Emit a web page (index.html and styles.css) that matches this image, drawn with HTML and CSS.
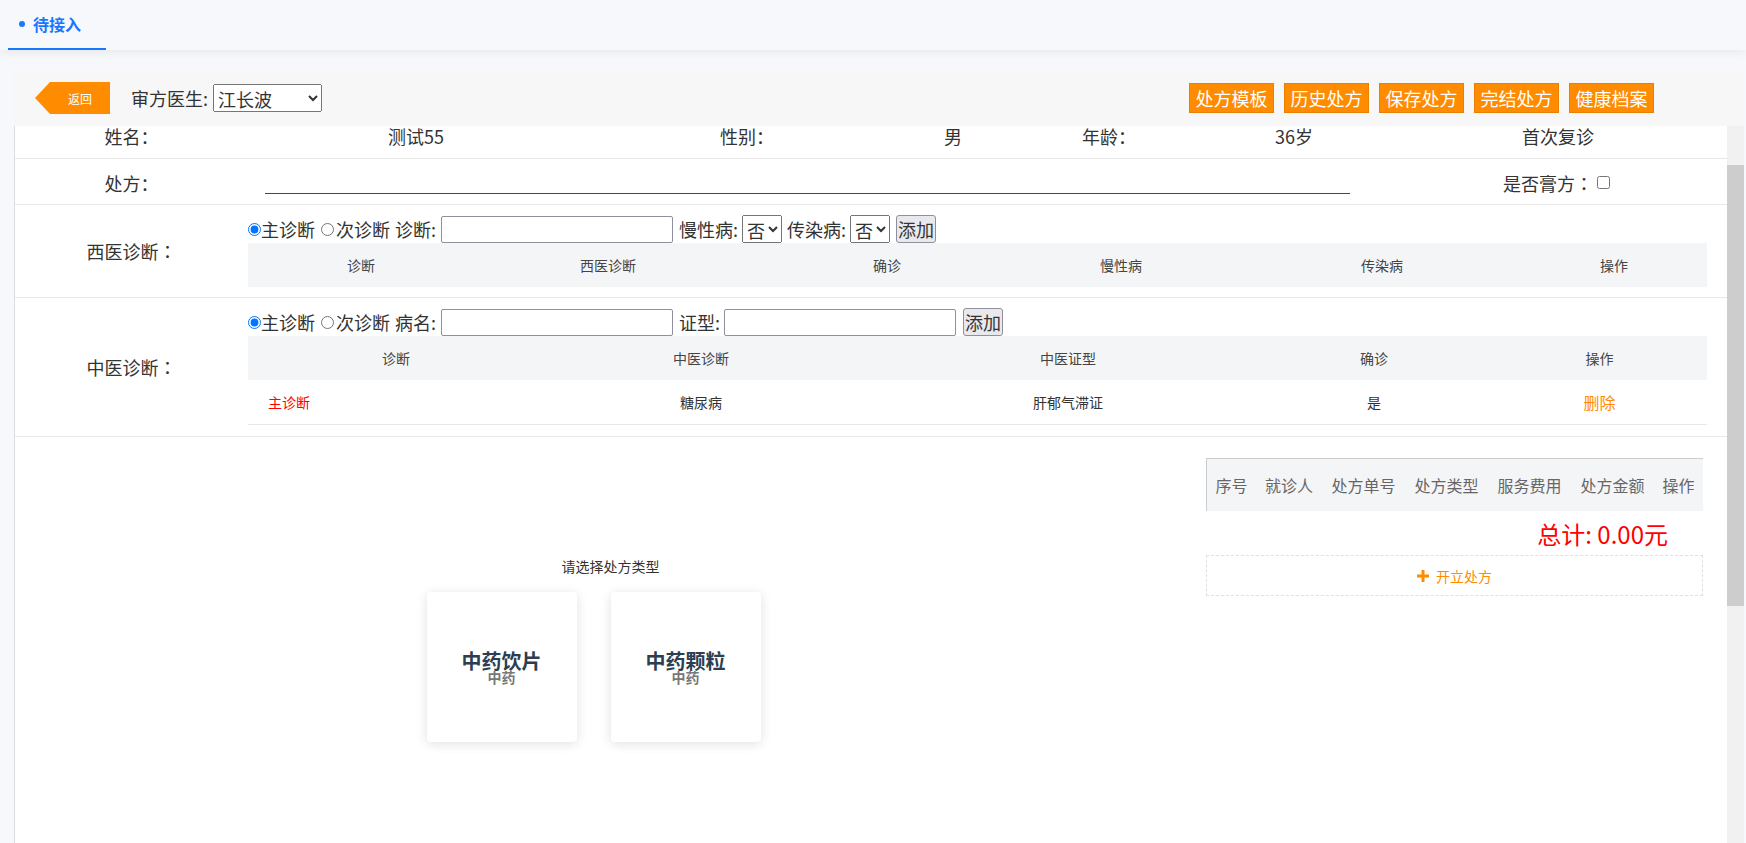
FILE: index.html
```html
<!DOCTYPE html>
<html lang="zh-CN">
<head>
<meta charset="utf-8">
<title>待接入</title>
<link rel="stylesheet" href="styles.css">
</head>
<body>
<div class="topbar">
  <div class="tab"><span class="dot"></span>待接入</div>
</div>
<div class="main">
  <div class="toolbar">
    <div class="back">返回</div>
    <div class="doctor"><span>审方医生:</span><select class="doc-select"><option>江长波</option></select></div>
    <div class="actions">
      <button class="act">处方模板</button>
      <button class="act">历史处方</button>
      <button class="act">保存处方</button>
      <button class="act">完结处方</button>
      <button class="act">健康档案</button>
    </div>
  </div>
  <div class="panel">
    <div class="content">
      <div class="row info info-top">
        <div class="c">姓名<span class="colon">：</span></div>
        <div class="c">测试55</div>
        <div class="c">性别<span class="colon">：</span></div>
        <div class="c">男</div>
        <div class="c">年龄<span class="colon">：</span></div>
        <div class="c">36岁</div>
        <div></div>
        <div class="c">首次复诊</div>
      </div>
      <div class="row info rx">
        <div class="c">处方<span class="colon">：</span></div>
        <div class="c span5"><input class="rx-input" type="text"></div>
        <div></div>
        <div class="c gao">是否膏方<span class="colon">：</span><input class="chk" type="checkbox"></div>
      </div>
      <div class="row diag">
        <div class="diag-label">西医诊断<span class="colon">：</span></div>
        <div class="diag-body">
          <div class="controls">
            <input class="radio" type="radio" name="w" checked><span>主诊断</span>
            <input class="radio r2" type="radio" name="w"><span>次诊断</span>
            <span class="lbl">诊断:</span><input class="txt" type="text">
            <span class="lbl2">慢性病:</span><select class="yn"><option>否</option><option>是</option></select>
            <span class="lbl3">传染病:</span><select class="yn"><option>否</option><option>是</option></select>
            <button class="add">添加</button>
          </div>
          <div class="thead west-cols">
            <div>诊断</div><div>西医诊断</div><div>确诊</div><div>慢性病</div><div>传染病</div><div>操作</div><div></div>
          </div>
        </div>
      </div>
      <div class="row diag">
        <div class="diag-label">中医诊断<span class="colon">：</span></div>
        <div class="diag-body tcm">
          <div class="controls">
            <input class="radio" type="radio" name="t" checked><span>主诊断</span>
            <input class="radio r2" type="radio" name="t"><span>次诊断</span>
            <span class="lbl">病名:</span><input class="txt" type="text">
            <span class="lbl2">证型:</span><input class="txt txt2" type="text">
            <button class="add add2">添加</button>
          </div>
          <div class="thead tcm-cols">
            <div>诊断</div><div>中医诊断</div><div>中医证型</div><div>确诊</div><div class="last">操作</div>
          </div>
          <div class="tbody tcm-cols">
            <div class="main-diag">主诊断</div><div>糖尿病</div><div>肝郁气滞证</div><div>是</div><div class="last del">删除</div>
          </div>
        </div>
      </div>
      <div class="rx-area">
        <div class="pick">
          <div class="pick-title">请选择处方类型</div>
          <div class="cards">
            <div class="card"><div class="card-title">中药饮片</div><div class="card-sub">中药</div></div>
            <div class="card"><div class="card-title">中药颗粒</div><div class="card-sub">中药</div></div>
          </div>
        </div>
        <div class="orders">
          <div class="order-head">
            <div>序号</div><div>就诊人</div><div>处方单号</div><div>处方类型</div><div>服务费用</div><div>处方金额</div><div>操作</div>
          </div>
          <div class="total">总计: 0.00元</div>
          <div class="open">
            <svg class="plus" width="12" height="12" viewBox="0 0 12 12"><rect x="4.5" y="0" width="3" height="12" fill="#ff8c00"/><rect x="0" y="4.5" width="12" height="3" fill="#ff8c00"/></svg>
            <span>开立处方</span>
          </div>
        </div>
      </div>
    </div>
    <div class="scrollbar"><div class="thumb"></div></div>
  </div>
</div>
</body>
</html>
```

FILE: styles.css
```css
* { box-sizing: border-box; }
html, body { margin: 0; padding: 0; }
body {
  width: 1746px;
  height: 843px;
  overflow: hidden;
  background: #f7f8fb;
  font-family: "Noto Sans CJK SC", "Noto Sans", sans-serif;
  color: #333;
}
.colon {
  font-family: "Noto Sans CJK JP", "Noto Sans CJK SC", sans-serif;
}
.topbar {
  height: 50px;
  background: #f7f8fb;
  box-shadow: 0 2px 10px rgba(0, 0, 0, 0.07);
  position: relative;
  z-index: 1;
  display: flex;
}
.tab {
  margin-left: 8px;
  width: 98px;
  height: 50px;
  border-bottom: 2px solid #1677ff;
  display: flex;
  align-items: center;
  padding-left: 11px;
  font-size: 16px;
  font-weight: bold;
  color: #1677ff;
}
.dot {
  width: 6px;
  height: 6px;
  border-radius: 50%;
  background: #1677ff;
  margin-right: 8px;
}
.main {
  margin: 20px 2px 0 14px;
  height: 773px;
  display: flex;
  flex-direction: column;
}
.toolbar {
  flex: none;
  height: 56px;
  background: #f7f7f7;
  display: flex;
  align-items: center;
  padding-left: 21px;
  padding-right: 90px;
}
.back {
  width: 75px;
  height: 32px;
  background: #ff8c00;
  clip-path: polygon(0 50%, 15px 0, 100% 0, 100% 100%, 15px 100%);
  color: #fff;
  font-size: 12px;
  display: flex;
  align-items: center;
  justify-content: center;
  padding-left: 15px;
}
.doctor {
  margin-left: 21px;
  font-size: 18px;
  display: flex;
  align-items: center;
  color: #333;
}
.doc-select {
  margin-left: 5px;
  width: 109px;
  height: 28px;
  font-size: 18px;
  font-family: inherit;
  color: #333;
}
.actions {
  margin-left: auto;
  display: flex;
  gap: 10px;
}
.act {
  width: 85px;
  height: 30px;
  padding: 0;
  background: #ff8c00;
  border: 1px solid #e98000;
  color: #fff;
  font-size: 18px;
  font-family: inherit;
  line-height: 28px;
}
.panel {
  flex: 1;
  min-height: 0;
  display: flex;
}
.content {
  flex: 1;
  min-width: 0;
  background: #fff;
  border-left: 1px solid #dcdcdc;
  display: flex;
  flex-direction: column;
}
.scrollbar {
  flex: none;
  width: 17px;
  background: #f1f1f1;
}
.thumb {
  margin-top: 39px;
  height: 441px;
  background: #cdcdcd;
}
.row {
  border-bottom: 1px solid #e8e8e8;
}
.info {
  display: grid;
  grid-template-columns: 233px 336px 326px 86px 226px 144px 23px 1fr;
  font-size: 18px;
}
.info-top {
  height: 33px;
  line-height: 21px;
}
.c {
  text-align: center;
  white-space: nowrap;
}
.rx {
  height: 46px;
  align-items: center;
  padding-top: 2px;
}
.span5 {
  grid-column: 2 / 7;
  display: flex;
  justify-content: center;
}
.rx-input {
  width: 1085px;
  height: 20px;
  margin-top: 3px;
  padding: 0;
  border: 0;
  border-bottom: 1px solid #e00;
  outline: none;
  background: transparent;
}
.gao {
  display: flex;
  align-items: center;
  justify-content: center;
}
.chk {
  margin: 0 3px 0 4px;
  width: 13px;
  height: 13px;
}
.diag {
  display: grid;
  grid-template-columns: 233px 1fr;
}
.diag-label {
  display: flex;
  align-items: center;
  justify-content: center;
  font-size: 18px;
}
.diag-body {
  padding: 10px 20px 10px 0;
}
.diag-body.tcm {
  padding-bottom: 11px;
}
.controls {
  display: flex;
  align-items: center;
  height: 28px;
  font-size: 18px;
  white-space: nowrap;
}
.radio {
  margin: 0;
  width: 13px;
  height: 13px;
}
.r2 {
  margin-left: 6px;
  margin-right: 2px;
}
.lbl { margin-left: 5px; }
.lbl2 { margin-left: 6px; }
.lbl3 { margin-left: 5px; }
.txt {
  margin-left: 5px;
  width: 232px;
  height: 27px;
  padding: 1px 2px;
  border: 1px solid #8f8f9d;
  border-radius: 2px;
  font-size: 14px;
  font-family: inherit;
}
.txt2 { margin-left: 4px; }
.yn {
  margin-left: 4px;
  width: 40px;
  height: 28px;
  padding: 0;
  font-size: 18px;
  font-family: inherit;
  color: #333;
}
.add {
  margin-left: 6px;
  width: 40px;
  height: 28px;
  padding: 0;
  font-size: 18px;
  font-family: inherit;
  color: #333;
  background: #e9e9ed;
  border: 1px solid #8f8f9d;
  border-radius: 3px;
  line-height: 26px;
}
.add2 { margin-left: 7px; }
.thead {
  display: grid;
  height: 44px;
  align-items: center;
  background: #f4f5f7;
  font-size: 14px;
  color: #444;
  text-align: center;
}
.west-cols {
  grid-template-columns: 226px 268px 290px 178px 344px 120px 1fr;
}
.tcm-cols {
  grid-template-columns: 296px 314px 420px 192px 1fr;
}
.tcm-cols .last {
  padding-left: 22px;
}
.tbody {
  display: grid;
  height: 45px;
  align-items: center;
  border-bottom: 1px solid #e8e8e8;
  font-size: 14px;
  color: #333;
  text-align: center;
}
.main-diag {
  text-align: left;
  padding-left: 20px;
  color: #f00;
}
.del {
  color: #ff8c00;
  font-size: 16px;
}
.rx-area {
  flex: 1;
  display: flex;
}
.pick {
  flex: 1;
  padding-top: 119px;
  text-align: center;
}
.pick-title {
  font-size: 14px;
  line-height: 20px;
  color: #333;
}
.cards {
  display: flex;
  justify-content: center;
  gap: 34px;
  padding-right: 34px;
  margin-top: 16px;
}
.card {
  width: 150px;
  height: 150px;
  background: #fff;
  border-radius: 4px;
  box-shadow: 0 2px 12px rgba(0, 0, 0, 0.12);
  display: flex;
  flex-direction: column;
  align-items: center;
  justify-content: center;
}
.card-title {
  font-size: 20px;
  font-weight: bold;
  line-height: 20px;
  color: #2c3e50;
}
.card-sub {
  margin-top: -1px;
  font-size: 14px;
  line-height: 14px;
  font-weight: bold;
  color: #777;
}
.orders {
  width: 497px;
  margin: 21px 24px 0 0;
}
.order-head {
  display: grid;
  grid-template-columns: 49px 66px 83px 83px 83px 83px 1fr;
  height: 53px;
  align-items: center;
  border-top: 1px solid #ccc;
  border-left: 1px solid #ccc;
  background: #f4f5f7;
  font-size: 16px;
  color: #666;
  text-align: center;
  white-space: nowrap;
}
.total {
  margin-top: 8px;
  padding-right: 35px;
  text-align: right;
  font-size: 24px;
  line-height: 30px;
  color: #f00;
}
.open {
  margin-top: 6px;
  height: 41px;
  border: 1px dashed #e0e0e0;
  display: flex;
  align-items: center;
  justify-content: center;
  color: #ff8c00;
  font-size: 14px;
}
.plus {
  margin-right: 7px;
}
```
